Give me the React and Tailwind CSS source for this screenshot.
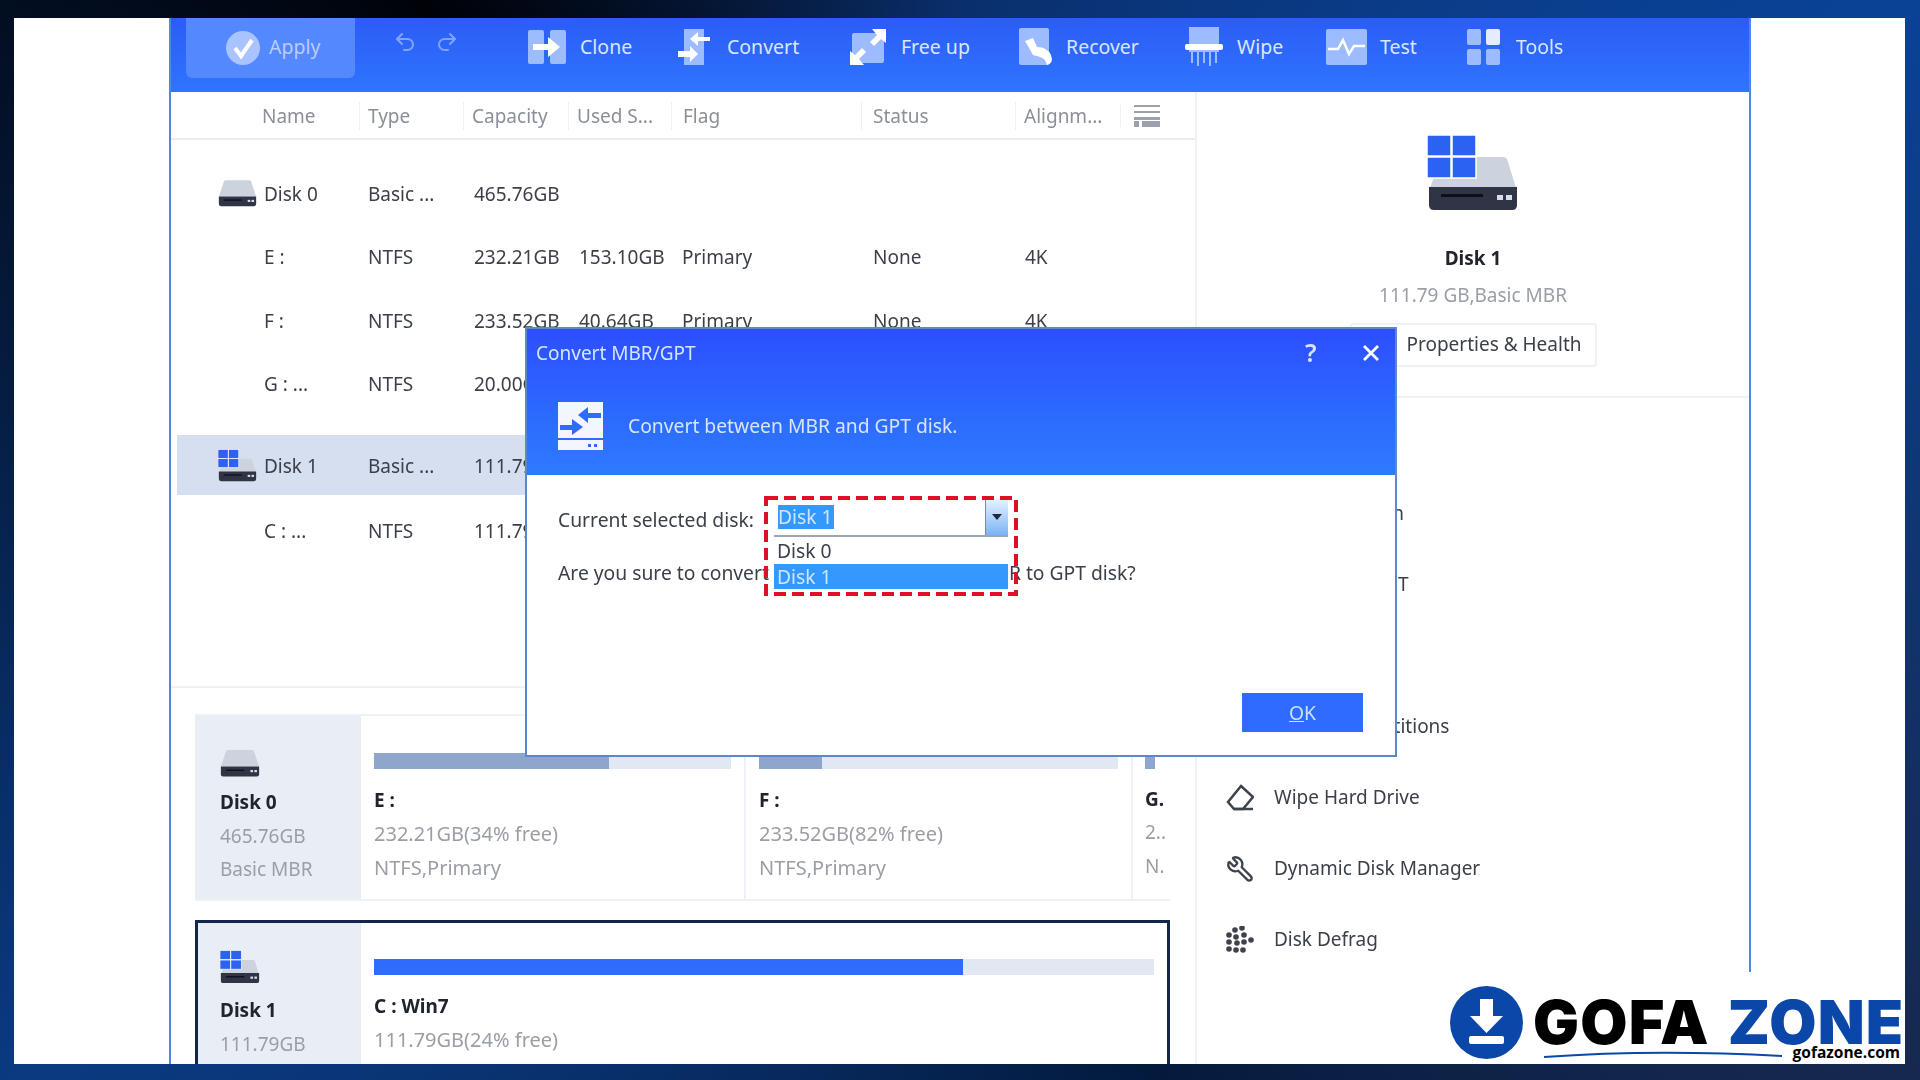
import { Undo2, Redo2, Wrench } from 'lucide-react'

const DriveIcon = ({ win, className }) => (
    <svg viewBox={win ? '0 0 92 76' : '0 14 92 62'} className={className}>
        <path d={win ? 'M18 22 H76 Q80 22 81 27 L90 56 H2 L12 27 Q13 22 18 22 Z' : 'M18 14 H74 Q78 14 79 19 L90 52 H2 L13 19 Q14 14 18 14 Z'} fill="#cdd3de" />
        <path d="M2 52 H90 V70 Q90 75 85 75 H7 Q2 75 2 70 Z" fill="#2f3547" />
        <rect x="14" y="59" width="42" height="3" fill="#0d1018" />
        <rect x="70" y="60" width="6" height="5" fill="#d8dde8" />
        <rect x="79" y="60" width="6" height="5" fill="#d8dde8" />
        {win && (
            <g fill="#2b62f2" stroke="#fff" strokeWidth="1.5">
                <rect x="0" y="0" width="24" height="21" />
                <rect x="25" y="0" width="24" height="21" />
                <rect x="0" y="22" width="24" height="21" />
                <rect x="25" y="22" width="24" height="21" />
            </g>
        )}
    </svg>
)

const CloneIcon = () => (
    <svg viewBox="0 0 38 40" className="w-[38px] h-[40px]">
        <rect x="0" y="3" width="16" height="34" rx="2" fill="#9dbbff" />
        <rect x="22" y="3" width="16" height="34" rx="2" fill="#9dbbff" />
        <path d="M5 17 H20 V10 L32 20 L20 30 V23 H5 Z" fill="#fff" />
    </svg>
)

const ConvertIcon = () => (
    <svg viewBox="0 0 32 40" className="w-[32px] h-[40px]">
        <path d="M6 2 H26 V38 H6 Z" fill="#9dbbff" />
        <path d="M32 10 H20 V5 L12 12 L20 19 V14 H32 Z" fill="#fff" />
        <path d="M0 24 H12 V19 L20 27 L12 35 V30 H0 Z" fill="#fff" />
    </svg>
)

const FreeIcon = () => (
    <svg viewBox="0 0 36 36" className="w-[36px] h-[36px]">
        <rect x="2" y="4" width="32" height="30" rx="2" fill="#9dbbff" />
        <path d="M22 0 H36 V14 L31 10 L24 17 L20 13 L27 6 Z" fill="#fff" />
        <path d="M14 36 H0 V22 L5 26 L12 19 L16 23 L9 30 Z" fill="#fff" />
    </svg>
)

const RecoverIcon = () => (
    <svg viewBox="0 0 36 40" className="w-[36px] h-[40px]">
        <rect x="0" y="1" width="30" height="37" rx="2" fill="#9dbbff" />
        <path d="M6 14 L14 11 L18 20 Q28 20 32 28 Q35 36 28 38 Q27 30 14 28 Z" fill="#fff" />
    </svg>
)

const WipeIcon = () => (
    <svg viewBox="0 0 38 40" className="w-[38px] h-[40px]">
        <rect x="4" y="0" width="30" height="17" fill="#9dbbff" />
        <rect x="0" y="17" width="38" height="6" rx="2" fill="#fff" />
        <path d="M4 24 H34 M7 24 V36 M13 24 V39 M19 24 V36 M25 24 V39 M31 24 V36" stroke="#9dbbff" strokeWidth="2" fill="none" />
    </svg>
)

const TestIcon = () => (
    <svg viewBox="0 0 41 36" className="w-[41px] h-[36px]">
        <rect x="0" y="0" width="41" height="36" rx="2" fill="#9dbbff" />
        <path d="M2 20 H12 L17 11 L23 25 L28 17 H39" stroke="#fff" strokeWidth="2.5" fill="none" />
    </svg>
)

const ToolsIcon = () => (
    <svg viewBox="0 0 33 36" className="w-[33px] h-[36px]">
        <rect x="0" y="0" width="14" height="16" rx="2" fill="#9dbbff" />
        <rect x="19" y="0" width="14" height="16" rx="2" fill="#e4ecff" />
        <rect x="0" y="20" width="14" height="16" rx="2" fill="#9dbbff" />
        <rect x="19" y="20" width="14" height="16" rx="2" fill="#9dbbff" />
    </svg>
)

const tools = [
    { label: 'Clone', icon: <CloneIcon />, width: 'w-[150px]', gap: 'gap-[14px]' },
    { label: 'Convert', icon: <ConvertIcon />, width: 'w-[172px]', gap: 'gap-[17px]' },
    { label: 'Free up', icon: <FreeIcon />, width: 'w-[169px]', gap: 'gap-[15px]' },
    { label: 'Recover', icon: <RecoverIcon />, width: 'w-[166px]', gap: 'gap-[11px]' },
    { label: 'Wipe', icon: <WipeIcon />, width: 'w-[141px]', gap: 'gap-[14px]' },
    { label: 'Test', icon: <TestIcon />, width: 'w-[141px]', gap: 'gap-[13px]' },
    { label: 'Tools', icon: <ToolsIcon />, width: 'w-[120px]', gap: 'gap-[16px]' },
]

const Toolbar = () => (
    <div className="h-[74px] shrink-0 flex pl-[15px] bg-gradient-to-b from-[#2c5cf6] to-[#2f74ff] text-[#dbe6ff] text-[19.5px]">
        <div className="w-[169px] h-[60px] flex items-center pl-[40px] gap-[9px] bg-[#5488ff] rounded-b-md text-[#b9cdff]">
            <svg viewBox="0 0 34 34" className="w-[34px] h-[34px]">
                <circle cx="17" cy="17" r="17" fill="#a9c3ff" />
                <path d="M9 17 L15 25 L26 9" stroke="#fff" strokeWidth="4" fill="none" />
            </svg>
            <span className="-mt-[2px]">Apply</span>
        </div>
        <div className="w-[173px] h-[48px] flex items-center pl-[38px] gap-[18px] text-[#7fa4ff]">
            <Undo2 size={24} />
            <Redo2 size={24} />
        </div>
        <div className="flex h-[58px] items-center">
            {tools.map((t) => (
                <div key={t.label} className={`flex items-center ${t.width} ${t.gap}`}>
                    {t.icon}
                    <span>{t.label}</span>
                </div>
            ))}
        </div>
    </div>
)

const headers = ['Name', 'Type', 'Capacity', 'Used S...', 'Flag', 'Status', 'Alignm...']

const rows = [
    { name: 'Disk 0', type: 'Basic ...', cap: '465.76GB', icon: 'plain' },
    { name: 'E :', type: 'NTFS', cap: '232.21GB', used: '153.10GB', flag: 'Primary', status: 'None', align: '4K' },
    { name: 'F :', type: 'NTFS', cap: '233.52GB', used: '40.64GB', flag: 'Primary', status: 'None', align: '4K' },
    { name: 'G : ...', type: 'NTFS', cap: '20.00GB', used: '', flag: 'Primary', status: 'None', align: '4K' },
]

const RowCells = ({ r }) => (
    <>
        <div className="flex items-center justify-end pr-[20px] gap-[7px]">
            {r.icon && <DriveIcon win={r.icon === 'win'} className={r.icon === 'win' ? 'w-[39px] h-[35px] -mt-[3px]' : 'w-[39px] h-[27px]'} />}
            <span className="w-[75px]">{r.name}</span>
        </div>
        <div className="pl-[9px]">{r.type}</div>
        <div className="pl-[11px]">{r.cap}</div>
        <div className="pl-[11px]">{r.used}</div>
        <div className="pl-[11px]">{r.flag}</div>
        <div className="pl-[12px]">{r.status}</div>
        <div className="pl-[10px]">{r.align}</div>
    </>
)

const DiskList = () => (
    <div className="w-[1026px] flex flex-col border-r-2 border-[#eef1f7]">
        <div className="h-[48px] shrink-0 pt-[2px] grid grid-cols-[188px_104px_105px_103px_190px_154px_105px_1fr] items-center border-b-2 border-[#e9ecf2] text-[19px] text-[#8a8f98]">
            {headers.map((h, i) => (
                <div key={h} className={i === 0 ? 'pl-[91px]' : h === 'Flag' || h === 'Status' ? 'pl-[11px] border-l border-[#eef0f4]' : 'pl-[8px] border-l border-[#eef0f4]'}>{h}</div>
            ))}
            <div className="pl-[13px] border-l border-[#eef0f4]">
                <svg viewBox="0 0 26 22" className="w-[26px] h-[22px]">
                    <path d="M0 1 H26 M0 7 H26" stroke="#9aa1ad" strokeWidth="2" />
                    <rect x="0" y="12" width="26" height="3" fill="#9aa1ad" />
                    <rect x="0" y="16" width="5" height="6" fill="#9aa1ad" />
                    <rect x="8" y="16" width="18" height="6" fill="#9aa1ad" />
                </svg>
            </div>
        </div>
        <div className="h-[548px] shrink-0 pt-[22px] border-b-2 border-[#eef1f7] text-[19px] text-[#3a3f49]">
            {rows.map((r) => (
                <div key={r.name} className="h-[63.5px] grid grid-cols-[188px_104px_105px_103px_190px_154px_105px] items-center">
                    <RowCells r={r} />
                </div>
            ))}
            <div className="mt-[19px] ml-[6px] h-[60px] pt-[3px] bg-[#d5dfef] grid grid-cols-[182px_104px_105px_103px_190px_154px_105px] items-center">
                <RowCells r={{ name: 'Disk 1', type: 'Basic ...', cap: '111.79GB', icon: 'win' }} />
            </div>
            <div className="h-[70px] pt-[2px] grid grid-cols-[188px_104px_105px_103px_190px_154px_105px] items-center">
                <RowCells r={{ name: 'C : ...', type: 'NTFS', cap: '111.79GB' }} />
            </div>
        </div>
        <div className="pt-[26px] pl-[24px] pr-[25px] flex flex-col gap-[19px]">
            <div className="h-[187px] flex border-b-2 border-t-2 border-[#eef1f7]">
                <DiskInfo name="Disk 0" size="465.76GB" kind="Basic MBR" />
                <Partition width="w-[385px]" bar="w-[357px]" used="w-[235px]" color="bg-[#8ea6cb]" label="E :" size="232.21GB(34% free)" fs="NTFS,Primary" />
                <Partition width="w-[387px]" bar="w-[359px]" used="w-[63px]" color="bg-[#8ea6cb]" label="F :" size="233.52GB(82% free)" fs="NTFS,Primary" />
                <div className="flex-1 pl-[12px] pt-[37px] text-[19px] leading-[27px] text-[#9a9ea6] overflow-hidden">
                    <div className="w-[10px] h-[16px] bg-[#8ea6cb]" />
                    <div className="mt-[17px] font-bold text-[#20242c]">G.</div>
                    <div className="mt-[6px]">2..</div>
                    <div className="mt-[7px]">N.</div>
                </div>
            </div>
            <div className="h-[200px] flex border-[3px] border-[#15264d]">
                <DiskInfo name="Disk 1" size="111.79GB" kind="Basic MBR" win />
                <div className="flex-1 pl-[13px] pr-[13px] pt-[36px]">
                    <div className="h-[16px] bg-[#e2e8f2]">
                        <div className="w-[589px] h-full bg-[#2f6bff]" />
                    </div>
                    <div className="mt-[18px] text-[19px] leading-[27px] font-bold text-[#20242c]">C : Win7</div>
                    <div className="mt-[6px] text-[20px] leading-[27px] text-[#9a9ea6]">111.79GB(24% free)</div>
                </div>
            </div>
        </div>
    </div>
)

const DiskInfo = ({ name, size, kind, win }) => (
    <div className={`${win ? 'w-[163px] pl-[22px] pt-[26px]' : 'w-[166px] pl-[25px] pt-[34px]'} shrink-0 bg-[#e9edf4] text-[19px] leading-[27px] text-[#9a9ea6]`}>
        <DriveIcon win={win} className={win ? 'w-[40px] h-[36px]' : 'w-[40px] h-[27px]'} />
        <div className="mt-[12px] font-bold text-[#20242c]">{name}</div>
        <div className="mt-[7px]">{size}</div>
        <div className="mt-[6px]">{kind}</div>
    </div>
)

const Partition = ({ width, bar, used, color, label, size, fs }) => (
    <div className={`${width} shrink-0 border-r-2 border-[#eef1f7] pl-[13px] pt-[37px] text-[20px] leading-[27px] text-[#9a9ea6]`}>
        <div className={`${bar} h-[16px] bg-[#e2e8f2]`}>
            <div className={`${used} ${color} h-full`} />
        </div>
        <div className="mt-[18px] text-[19px] font-bold text-[#20242c]">{label}</div>
        <div className="mt-[6px]">{size}</div>
        <div className="mt-[7px]">{fs}</div>
    </div>
)

const EraserIcon = () => (
    <svg viewBox="0 0 28 28" className="w-[28px] h-[28px]" fill="none" stroke="#3d424c" strokeWidth="2.5">
        <path d="M15 2 L27 13 L17 25 H8 L2 18 Z" />
        <path d="M8 25 H27" />
    </svg>
)

const DotsIcon = () => (
    <svg viewBox="0 0 28 28" className="w-[28px] h-[28px]" fill="#3d424c">
        {[[9, 4], [16, 2], [3, 9], [10, 11], [18, 9], [3, 16], [11, 17], [18, 16], [25, 14], [3, 23], [10, 24], [17, 24]].map(([x, y]) => (
            <circle key={`${x}-${y}`} cx={x} cy={y} r="2.8" />
        ))}
    </svg>
)

const sideItems = [
    { label: 'Disk Migration' },
    { label: 'Convert to GPT' },
    { label: 'Rebuild MBR' },
    { label: 'Delete All Partitions' },
    { label: 'Wipe Hard Drive', icon: <EraserIcon /> },
    { label: 'Dynamic Disk Manager', icon: <Wrench size={28} className="text-[#3d424c] -scale-x-100" /> },
    { label: 'Disk Defrag', icon: <DotsIcon /> },
]

const SidePanel = () => (
    <div className="flex-1 flex flex-col">
        <div className="h-[306px] shrink-0 border-b-2 border-[#eef1f7] flex flex-col items-center pt-[43px]">
            <DriveIcon win className="w-[92px] h-[76px]" />
            <div className="mt-[33px] text-[19px] font-bold text-[#20242c]">Disk 1</div>
            <div className="mt-[9px] text-[19px] leading-[27px] text-[#9a9ea6]">111.79 GB,Basic MBR</div>
            <div className="mt-[14px] h-[44px] w-[247px] border-2 border-[#eef1f7] rounded flex items-center justify-end pr-[13px] text-[19px] text-[#3a3f49]">
                Properties &amp; Health
            </div>
        </div>
        <div className="pt-[80px] pl-[29px] text-[19px] text-[#3a3f49]">
            {sideItems.map((item) => (
                <div key={item.label} className="h-[71px] flex items-center gap-[20px]">
                    <div className="w-[28px] flex justify-center">{item.icon}</div>
                    {item.label}
                </div>
            ))}
        </div>
    </div>
)

const ConvertDialog = () => (
    <div className="absolute left-[525px] top-[327px] w-[872px] h-[430px] bg-white border-2 border-[#5f86c8] flex flex-col text-[19.3px] text-[#3a3f49] blur-[0.4px]">
        <div className="h-[146px] shrink-0 bg-gradient-to-b from-[#2d4eff] to-[#2f7aff] text-[#d9e5ff] pl-[9px]">
            <div className="h-[48px] flex items-center">
                <span className="flex-1 text-[19px]">Convert MBR/GPT</span>
                <span className="w-[57px] text-[25px] font-semibold">?</span>
                <svg viewBox="0 0 18 18" className="w-[18px] h-[18px] mr-[15px]" stroke="#fff" strokeWidth="2.8">
                    <path d="M2 2 L16 16 M16 2 L2 16" />
                </svg>
            </div>
            <div className="flex items-center gap-[25px] pl-[22px] pt-[25px]">
                <svg viewBox="0 0 45 48" className="w-[45px] h-[48px]">
                    <rect width="45" height="48" fill="#f3f6ff" />
                    <path d="M43 11 H30 V5 L20 13 L30 21 V16 H43 Z" fill="#2f6bff" />
                    <path d="M2 23 H14 V17 L25 25 L14 33 V28 H2 Z" fill="#2f6bff" />
                    <rect x="0" y="36" width="45" height="2" fill="#2f6bff" />
                    <rect x="30" y="42" width="3" height="3" fill="#2f6bff" />
                    <rect x="36" y="42" width="3" height="3" fill="#2f6bff" />
                </svg>
                <span>Convert between MBR and GPT disk.</span>
            </div>
        </div>
        <div className="relative flex-1 pl-[31px] leading-[27px]">
            <div className="pt-[31px]">Current selected disk:</div>
            <div className="mt-[26px] whitespace-nowrap">Are you sure to convert the selected disk from MBR to GPT disk?</div>
            <div className="absolute left-[247px] top-[24px] w-[234px] bg-white">
                <div className="h-[38px] flex items-center border-b-2 border-[#9aa5b5] pl-[4px]">
                    <span className="w-[56px] h-[24px] bg-[#3399ff] text-[#cfe6ff] leading-[24px]">Disk 1</span>
                    <span className="ml-auto w-[23px] h-[36px] bg-gradient-to-b from-[#e8f2ff] to-[#79b4f5] border-l border-[#7a8aa5] flex items-center justify-center">
                        <span className="w-0 h-0 border-x-[5px] border-x-transparent border-t-[6px] border-t-[#202838]" />
                    </span>
                </div>
                <div className="h-[27px] flex items-center pl-[3px]">Disk 0</div>
                <div className="h-[25px] flex items-center pl-[3px] bg-[#3399ff] text-[#cfe6ff]">Disk 1</div>
            </div>
            <svg viewBox="0 0 254 100" className="absolute left-[237px] top-[21px] w-[254px] h-[100px]" fill="none" stroke="#dd1028" strokeWidth="4">
                <rect x="2" y="2" width="250" height="96" strokeDasharray="12 6" />
            </svg>
            <div className="absolute right-[32px] bottom-[23px] w-[121px] h-[39px] bg-[#2f6bff] text-[#cfe0ff] flex items-center justify-center">
                <span><span className="underline">O</span>K</span>
            </div>
        </div>
    </div>
)

const Logo = () => (
    <div className="absolute left-[1440px] top-[972px] w-[465px] h-[92px] bg-white">
        <svg viewBox="0 0 73 73" className="absolute left-[10px] top-[14px] w-[73px] h-[73px]">
            <circle cx="36.5" cy="36.5" r="36.5" fill="#0a47a9" />
            <path d="M30 13 H43 V30 H53 L36.5 47 L20 30 H30 Z" fill="#fff" />
            <rect x="19" y="50" width="35" height="8" rx="2" fill="#fff" />
        </svg>
        <div className="absolute left-[93px] top-[14px] flex gap-[18px] font-['Inter',sans-serif] font-black text-[61px] leading-[72px] tracking-[1.2px]">
            <span className="text-black">GOFA</span>
            <span className="text-[#0a47a9]">ZONE</span>
        </div>
        <svg viewBox="0 0 240 8" className="absolute left-[104px] top-[78px] w-[240px] h-[8px]" fill="none" stroke="#0a47a9" strokeWidth="2">
            <path d="M0 7 Q110 -1 238 6" />
        </svg>
        <div className="absolute right-[5px] top-[70px] text-[15.5px] leading-[20px] font-bold font-['Open_Sans',sans-serif] text-black">gofazone.com</div>
    </div>
)

const App = () => (
    <div className="relative w-[1920px] h-[1080px] overflow-hidden pt-[18px] pl-[14px] pr-[15px] pb-[16px] font-['Noto_Sans',sans-serif] bg-[conic-gradient(at_50%_50%,#0a2f6c_0deg,#0a4296_60deg,#16284e_120deg,#031a3d_160deg,#0b3a80_240deg,#000208_315deg,#0a2f6c_360deg)]">
        <div className="h-full bg-white pl-[155px] pr-[154px]">
            <div className="h-full flex flex-col border-x-2 border-[#4f86ea] overflow-hidden blur-[0.4px]">
                <Toolbar />
                <div className="flex-1 flex min-h-0">
                    <DiskList />
                    <SidePanel />
                </div>
            </div>
        </div>
        <ConvertDialog />
        <Logo />
    </div>
)

export default App
